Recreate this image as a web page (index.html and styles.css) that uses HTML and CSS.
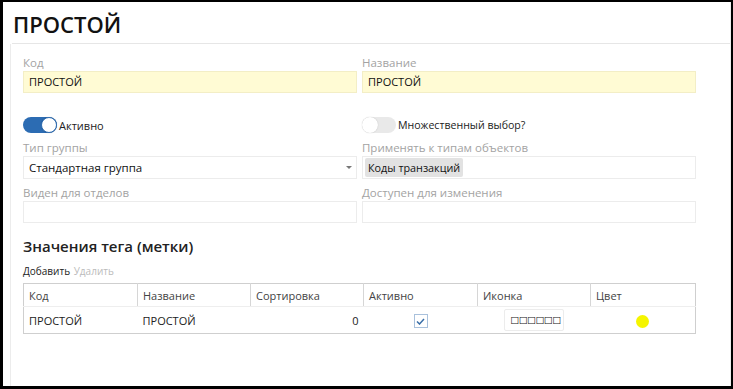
FILE: index.html
```html
<!DOCTYPE html>
<html lang="ru">
  <head>
    <meta charset="UTF-8" />
    <title>ПРОСТОЙ</title>
    <link rel="stylesheet" href="styles.css">
  </head>
  <body>
    <div class="tag-window">
      <h1 class="tag-title">ПРОСТОЙ</h1>
      <div class="tag-panel">
        <div class="tag-grid">
          <div class="tag-field">
            <label class="tag-label">Код</label>
            <div class="tag-input tag-input-required">ПРОСТОЙ</div>
          </div>
          <div class="tag-field">
            <label class="tag-label">Название</label>
            <div class="tag-input tag-input-required">ПРОСТОЙ</div>
          </div>

          <div class="tag-switch-row">
            <span class="tag-switch tag-switch-on"><span class="tag-knob"></span></span>
            <span class="tag-switch-text">Активно</span>
          </div>
          <div class="tag-switch-row">
            <span class="tag-switch"><span class="tag-knob"></span></span>
            <span class="tag-switch-text">Множественный выбор?</span>
          </div>

          <div class="tag-field">
            <label class="tag-label">Тип группы</label>
            <div class="tag-input tag-select">
              <span>Стандартная группа</span>
              <span class="tag-caret"></span>
            </div>
          </div>
          <div class="tag-field">
            <label class="tag-label">Применять к типам объектов</label>
            <div class="tag-input tag-chips">
              <span class="tag-chip">Коды транзакций</span>
            </div>
          </div>

          <div class="tag-field">
            <label class="tag-label">Виден для отделов</label>
            <div class="tag-input"></div>
          </div>
          <div class="tag-field">
            <label class="tag-label">Доступен для изменения</label>
            <div class="tag-input"></div>
          </div>
        </div>

        <h2 class="tag-subtitle">Значения тега (метки)</h2>
        <div class="tag-toolbar">
          <a class="tag-action">Добавить</a>
          <a class="tag-action tag-action-disabled">Удалить</a>
        </div>

        <table class="tag-table">
          <colgroup>
            <col style="width: 114px">
            <col style="width: 113px">
            <col style="width: 113px">
            <col style="width: 114px">
            <col style="width: 113px">
            <col style="width: 105px">
          </colgroup>
          <thead>
            <tr>
              <th>Код</th>
              <th>Название</th>
              <th>Сортировка</th>
              <th>Активно</th>
              <th>Иконка</th>
              <th>Цвет</th>
            </tr>
          </thead>
          <tbody>
            <tr>
              <td>ПРОСТОЙ</td>
              <td>ПРОСТОЙ</td>
              <td class="tag-num">0</td>
              <td class="tag-center">
                <span class="tag-check">
                  <svg width="9" height="7" viewBox="0 0 9 7"><path d="M1 3.5 L3.5 6 L8 1" fill="none" stroke="#3a6fa8" stroke-width="1.5"/></svg>
                </span>
              </td>
              <td class="tag-center"><span class="tag-icon-box">□□□□□□</span></td>
              <td class="tag-center"><span class="tag-dot"></span></td>
            </tr>
          </tbody>
        </table>
      </div>
    </div>
  </body>
</html>
```

FILE: styles.css
```css
html,
body {
  margin: 0;
  height: 100%;
}

body {
  background: #000;
  padding: 2px 2px 3px 3px;
  box-sizing: border-box;
  font-family: "Open Sans", "Noto Sans", sans-serif;
  color: #222;
}

.tag-window {
  background: #fff;
  height: 100%;
  box-sizing: border-box;
  padding: 0 0 0 7px;
  display: flex;
  flex-direction: column;
  border-right: 1px solid #eeeeee;
}

.tag-title {
  margin: 0 0 0 2px;
  padding: 7px 0 0 1px;
  height: 42px;
  font-size: 22px;
  font-weight: 600;
  color: #111;
  box-sizing: border-box;
  border-bottom: 1px solid #e6e6e6;
}

.tag-panel {
  flex: 1;
  border-left: 1px solid #ececec;
  padding: 11px 33px 0 12px;
}

.tag-grid {
  display: grid;
  grid-template-columns: 334px 334px;
  column-gap: 5px;
}

.tag-field {
  display: flex;
  flex-direction: column;
  margin-bottom: 6px;
}

.tag-label {
  font-size: 11.5px;
  color: #a3a3a3;
  height: 16px;
  line-height: 16px;
}

.tag-input {
  height: 22px;
  box-sizing: border-box;
  border: 1px solid #ececec;
  padding: 0 5px;
  font-size: 11px;
  line-height: 20px;
  color: #111;
}

.tag-input-required {
  background: #fffbd4;
  border-color: #f3eec6;
}

.tag-select {
  height: 23px;
  display: flex;
  justify-content: space-between;
  align-items: center;
  font-size: 11.5px;
}

.tag-caret {
  width: 0;
  height: 0;
  border-left: 3px solid transparent;
  border-right: 3px solid transparent;
  border-top: 3px solid #777;
  margin-right: -1px;
}

.tag-chips {
  height: 23px;
  padding: 1px 2px;
  display: flex;
  align-items: center;
}

.tag-chip {
  background: #e2e2e2;
  border-radius: 2px;
  font-size: 10.8px;
  line-height: 19px;
  padding: 0 3px;
}

.tag-switch-row {
  display: flex;
  align-items: center;
  height: 24px;
  margin: 14px 0 3px;
}

.tag-switch {
  width: 34px;
  height: 16px;
  border-radius: 8px;
  background: #e9e9e9;
  position: relative;
  margin-right: 2px;
}

.tag-switch-on {
  background: #2c6cb3;
}

.tag-knob {
  position: absolute;
  top: 0;
  left: 0;
  width: 16px;
  height: 16px;
  border-radius: 50%;
  background: #fff;
  box-shadow: 0 0 1px rgba(0, 0, 0, 0.25);
}

.tag-switch-on .tag-knob {
  left: auto;
  right: 0;
  border: 1px solid #2c6cb3;
  box-sizing: border-box;
}

.tag-switch-text {
  font-size: 10.6px;
  color: #222;
}

.tag-switch-on + .tag-switch-text {
  font-size: 11px;
}

.tag-subtitle {
  margin: 6px 0 0;
  font-size: 15px;
  font-weight: 600;
  color: #222;
  height: 22px;
  line-height: 22px;
}

.tag-toolbar {
  font-size: 10px;
  height: 18px;
  line-height: 18px;
  margin-top: 5px;
  margin-bottom: 3px;
}

.tag-action {
  color: #222;
  margin-right: 1px;
}

.tag-action-disabled {
  color: #bbb;
}

.tag-table {
  width: 673px;
  border-collapse: collapse;
  border: 1px solid #cfcfcf;
  table-layout: fixed;
  font-size: 11px;
}

.tag-table th {
  font-weight: normal;
  text-align: left;
  color: #444;
  height: 22px;
  padding: 0 5px;
  border-left: 1px solid #d6d6d6;
  border-bottom: 1px solid #eeeeee;
}

.tag-table th:first-child {
  border-left: none;
}

.tag-table td {
  height: 26px;
  padding: 0 5px;
  color: #222;
}

.tag-table .tag-num {
  text-align: right;
}

.tag-table .tag-center {
  text-align: center;
}

.tag-check {
  display: inline-flex;
  align-items: center;
  justify-content: center;
  width: 12px;
  height: 12px;
  border: 1px solid #a9c1dc;
  vertical-align: middle;
}

.tag-icon-box {
  display: inline-block;
  height: 22px;
  box-sizing: border-box;
  border: 1px solid #ececec;
  border-radius: 2px;
  white-space: nowrap;
  font-family: "DejaVu Sans", sans-serif;
  font-size: 9.5px;
  line-height: 20px;
  padding: 0 2px 0 5px;
  vertical-align: middle;
  letter-spacing: -0.6px;
  color: #111;
}

.tag-dot {
  display: inline-block;
  width: 13px;
  height: 13px;
  border-radius: 50%;
  background: #f5f500;
  vertical-align: middle;
}
```
